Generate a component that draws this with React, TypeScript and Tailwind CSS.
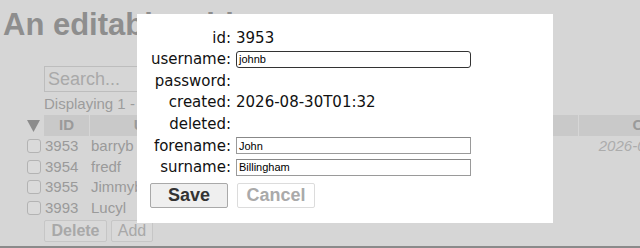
import React from "react";

const rows = [
  { id: "3953", user: "barryb" },
  { id: "3954", user: "fredf" },
  { id: "3955", user: "Jimmyb" },
  { id: "3993", user: "Lucyl" },
];

function Field({ label, children }: { label: string; children?: React.ReactNode }) {
  return (
    <div className="flex h-[21.6px] items-center">
      <div className="w-[81px] shrink-0 text-right">{label}</div>
      <div className="ml-[5px] flex items-center">{children}</div>
    </div>
  );
}

export default function App() {
  return (
    <div className="relative h-[248px] w-[640px] overflow-hidden bg-[#d6d6d6] font-['Liberation_Sans',Arial,sans-serif]">
      {/* page behind overlay */}
      <div className="flex h-[246px] flex-col">
        <h1 className="ml-[3px] mt-[9px] h-[32px] text-[31px] font-bold leading-[32px] text-[#8e8e8e] whitespace-nowrap">
          An editable table
        </h1>
        <div className="ml-[44px] mt-[25px] flex h-[26px] w-[300px] items-center border border-[#bdbdbd] pl-[3px] text-[18px] text-[#a9a9a9]">
          Search...
        </div>
        <div className="ml-[44px] mt-[2px] h-[21px] text-[15px] leading-[20px] text-[#9c9c9c] whitespace-nowrap">
          Displaying 1 - 4 of 4
        </div>
        <div className="ml-[27px] flex flex-col text-[15px] text-[#9a9a9a]">
          <div className="flex h-[21px] items-stretch">
            <div className="flex w-[17px] shrink-0 items-center">
              <svg width="13" height="12" viewBox="0 0 13 12">
                <polygon points="0,0 13,0 6.5,12" fill="#8c8c8c" />
              </svg>
            </div>
            <div className="flex w-[45px] shrink-0 items-center justify-center bg-[#c9c9c9] font-bold">ID</div>
            <div className="ml-px flex w-[160px] shrink-0 items-center justify-center bg-[#c9c9c9] font-bold">Username</div>
            <div className="ml-px flex w-[163px] shrink-0 items-center justify-center bg-[#c9c9c9] font-bold">Forename</div>
            <div className="ml-px flex w-[163px] shrink-0 items-center justify-center bg-[#c9c9c9] font-bold">Surname</div>
            <div className="ml-px flex w-[163px] shrink-0 items-center justify-center bg-[#c9c9c9] font-bold">Created</div>
          </div>
          {rows.map((r, i) => (
            <div key={r.id} className="flex h-[20.5px] items-center whitespace-nowrap">
              <div className="flex w-[17px] shrink-0 items-center">
                <div className="h-[14px] w-[14px] rounded-[3px] border border-[#b3b3b3] bg-[#dadada]" />
              </div>
              <div className="w-[45px] shrink-0 pl-px">{r.id}</div>
              <div className="ml-px w-[160px] shrink-0 pl-px">{r.user}</div>
              <div className="ml-px w-[163px] shrink-0" />
              <div className="ml-px w-[163px] shrink-0" />
              <div className="ml-px w-[163px] shrink-0 text-center italic text-[#acacac]">
                {i === 0 ? "2026-08-30T01:32" : ""}
              </div>
            </div>
          ))}
        </div>
        <div className="ml-[44px] mt-[2px] flex gap-[4px] text-[16px]">
          <div className="flex h-[22px] w-[63px] items-center justify-center rounded-[2px] border border-[#c6c6c6] bg-[#d9d9d9] font-bold text-[#a8a8a8]">
            Delete
          </div>
          <div className="flex h-[22px] w-[42px] items-center justify-center rounded-[2px] border border-[#c6c6c6] bg-[#d9d9d9] text-[#a8a8a8]">
            Add
          </div>
        </div>
      </div>
      <div className="h-[2px] bg-[#8a8a8a]" />

      {/* modal */}
      <div className="absolute left-[137px] top-[14px] h-[209px] w-[416px] bg-white pl-[13px] pt-[13px] font-['DejaVu_Sans',sans-serif] text-[15px] text-[#111]">
        <Field label="id:">3953</Field>
        <Field label="username:">
          <div className="flex h-[17px] w-[235px] items-center rounded-[3px] border-[1.5px] border-[#333] pl-[2px] font-['Liberation_Sans',Arial,sans-serif] text-[11px] text-black">
            johnb
          </div>
        </Field>
        <Field label="password:" />
        <Field label="created:">2026-08-30T01:32</Field>
        <Field label="deleted:" />
        <Field label="forename:">
          <div className="flex h-[17px] w-[235px] items-center border border-[#9a9a9a] border-t-[#888] pl-[2px] font-['Liberation_Sans',Arial,sans-serif] text-[11px] text-black">
            John
          </div>
        </Field>
        <Field label="surname:">
          <div className="flex h-[17px] w-[235px] items-center border border-[#9a9a9a] border-t-[#888] pl-[2px] font-['Liberation_Sans',Arial,sans-serif] text-[11px] text-black">
            Billingham
          </div>
        </Field>
        <div className="mt-[5px] flex gap-[9px] font-['Liberation_Sans',Arial,sans-serif] text-[18px] font-bold">
          <div className="flex h-[25px] w-[78px] items-center justify-center rounded-[2px] border border-[#a9a9a9] bg-[#efefef] text-[#333]">
            Save
          </div>
          <div className="flex h-[25px] w-[78px] items-center justify-center rounded-[2px] border border-[#dcdcdc] bg-white text-[#aaa]">
            Cancel
          </div>
        </div>
      </div>
    </div>
  );
}
